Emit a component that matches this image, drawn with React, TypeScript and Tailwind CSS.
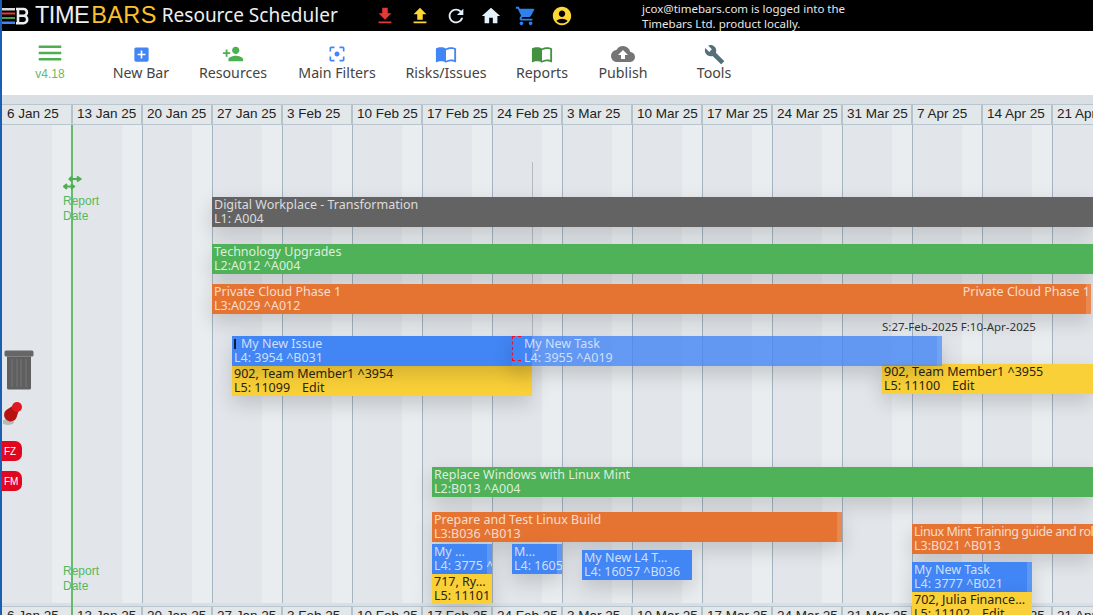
import { MdFileDownload, MdFileUpload, MdRefresh, MdHome, MdShoppingCart, MdAccountCircle, MdMenu, MdAddBox, MdPersonAdd, MdFilterCenterFocus, MdImportContacts, MdCloudUpload, MdBuild } from 'react-icons/md';

const dates = ['6 Jan 25', '13 Jan 25', '20 Jan 25', '27 Jan 25', '3 Feb 25', '10 Feb 25', '17 Feb 25', '24 Feb 25', '3 Mar 25', '10 Mar 25', '17 Mar 25', '24 Mar 25', '31 Mar 25', '7 Apr 25', '14 Apr 25', '21 Apr 25'];

const barFont = "font-['Noto_Sans',sans-serif] text-[12.5px] leading-[14px]";
const barShadow = 'shadow-[0_8px_20px_rgba(0,0,0,0.16)]';
const grey = 'bg-[#636363] text-[#dcdcdc]';
const green = 'bg-[#4fb158] text-[#dcefdd]';
const orange = 'bg-[#e57432] text-[#f5ddcd]';
const blue = 'bg-[#4285f4] text-[#cfdffb]';
const yellow = 'bg-[#fad038] text-[#2a2410]';

const bars = [
  { cls: `left-[210px] top-[72px] w-[881px] ${grey}`, a: 'Digital Workplace - Transformation', b: 'L1: A004' },
  { cls: `left-[210px] top-[119px] w-[881px] ${green}`, a: 'Technology Upgrades', b: 'L2:A012 ^A004' },
  { cls: `left-[430px] top-[342px] w-[661px] ${green}`, a: 'Replace Windows with Linux Mint', b: 'L2:B013 ^A004' },
  { cls: `left-[430px] top-[387px] w-[410px] ${orange}`, a: 'Prepare and Test Linux Build', b: 'L3:B036 ^B013', end: true },
  { cls: `left-[910px] top-[399px] w-[181px] ${orange}`, a: 'Linux Mint Training guide and roll out', b: 'L3:B021 ^B013', tight: true },
  { cls: `left-[230px] top-[241px] w-[300px] ${yellow}`, a: '902, Team Member1 ^3954', b: 'L5: 11099', edit: true },
  { cls: `left-[880px] top-[239px] w-[211px] ${yellow}`, a: '902, Team Member1 ^3955', b: 'L5: 11100', edit: true },
  { cls: `left-[430px] top-[419px] w-[60px] ${blue}`, a: 'My …', b: 'L4: 3775 ^B036', end: true },
  { cls: `left-[430px] top-[449px] w-[60px] ${yellow}`, a: '717, Ry…', b: 'L5: 11101' },
  { cls: `left-[510px] top-[419px] w-[50px] ${blue}`, a: 'M…', b: 'L4: 16056', end: true },
  { cls: `left-[580px] top-[425px] w-[110px] ${blue}`, a: 'My New L4 T…', b: 'L4: 16057 ^B036' },
  { cls: `left-[910px] top-[437px] w-[120px] ${blue}`, a: 'My New Task', b: 'L4: 3777 ^B021', end: true },
  { cls: `left-[910px] top-[467px] w-[120px] ${yellow}`, a: '702, Julia Finance…', b: 'L5: 11102', edit: true },
];

function ToolItem({ icon, label, width }: { icon: React.ReactNode; label: string; width: string }) {
  return (
    <div className={`flex flex-col items-center ${width}`}>
      <div className="flex h-[24px] items-center">{icon}</div>
      <span className="-mt-[3px] font-['Noto_Sans',sans-serif] text-[14.2px] leading-[20px] text-[#444]">{label}</span>
    </div>
  );
}

function DateRow() {
  return (
    <div className="flex h-[21px] w-[1121px] shrink-0 border-y border-[#b9c6cf] bg-[#e2e7ea] pl-[1px]">
      {dates.map(d => (
        <div key={d} className="w-[70px] shrink-0 border-r-2 border-[#b4c2cc] pl-[4px] font-['Liberation_Sans',sans-serif] text-[13.5px] leading-[18px] text-[#222]">
          {d}
        </div>
      ))}
    </div>
  );
}

function ReportDate({ cls }: { cls: string }) {
  return (
    <div className={`absolute left-[61px] font-['Liberation_Sans',sans-serif] text-[12px] leading-[15px] text-[#55b85c] ${cls}`}>
      Report<br />Date
    </div>
  );
}

export default function App() {
  return (
    <div className="flex h-[615px] w-[1093px] flex-col overflow-hidden border-l-2 border-[#1a5fb4] bg-white">
      <header className="flex h-[31px] shrink-0 items-center bg-black text-white">
        <div className="flex w-[365px] items-center">
          <svg width="27" height="20" viewBox="0 0 27 20" className="shrink-0">
            <rect x="0" y="2" width="13" height="2.5" fill="#d9d9d9" />
            <rect x="0" y="6.5" width="13" height="2" fill="#e53935" />
            <rect x="0" y="11" width="13" height="2" fill="#43a047" />
            <rect x="0" y="15.5" width="13" height="2.5" fill="#4285f4" />
            <path d="M14 3h7.5a3.3 3.3 0 0 1 0 6.8H16M21.5 9.8a3.7 3.7 0 0 1 0 7.4H14M16 3v14" fill="none" stroke="#eceff1" strokeWidth="2.6" />
          </svg>
          <span className="ml-[6px] font-['Liberation_Sans',sans-serif] text-[23.5px] leading-[31px] tracking-[-0.5px] text-[#eceff1]">TIME</span>
          <span className="ml-[2px] font-['Liberation_Sans',sans-serif] text-[23.5px] leading-[31px] tracking-[0.4px] text-[#fbc02d]">BARS</span>
          <span className="ml-[5px] font-['Noto_Sans',sans-serif] text-[19px] leading-[31px] text-[#eceff1]">Resource Scheduler</span>
        </div>
        <div className="flex w-[35px] justify-center text-[22px] text-[#e53935]"><MdFileDownload /></div>
        <div className="flex w-[36px] justify-center text-[22px] text-[#fdd835]"><MdFileUpload /></div>
        <div className="flex w-[35px] justify-center text-[22px] text-[#e3f2fd]"><MdRefresh /></div>
        <div className="flex w-[35px] justify-center text-[22px] text-[#e3f2fd]"><MdHome /></div>
        <div className="flex w-[36px] justify-center text-[22px] text-[#2f80ed]"><MdShoppingCart /></div>
        <div className="flex w-[35px] justify-center text-[22px] text-[#fdd835]"><MdAccountCircle /></div>
        <div className="ml-[63px] font-['Noto_Sans',sans-serif] text-[11.5px] leading-[15px] text-[#e8e8e8]">
          jcox@timebars.com is logged into the<br />Timebars Ltd. product locally.
        </div>
      </header>

      <nav className="flex h-[64px] shrink-0 items-start bg-white pt-[11px]">
        <div className="flex w-[96px] flex-col items-center">
          <MdMenu className="text-[30px] text-[#4caf50] -my-[4px]" />
          <span className="mt-[3px] font-['Liberation_Sans',sans-serif] text-[12px] leading-[14px] text-[#66bb6a]">v4.18</span>
        </div>
        <ToolItem width="w-[86px]" label="New Bar" icon={<MdAddBox className="text-[19px] text-[#4285f4]" />} />
        <ToolItem width="w-[98px]" label="Resources" icon={<MdPersonAdd className="text-[22px] text-[#4caf50]" />} />
        <ToolItem width="w-[110px]" label="Main Filters" icon={<MdFilterCenterFocus className="text-[20px] text-[#4285f4]" />} />
        <ToolItem width="w-[108px]" label="Risks/Issues" icon={<MdImportContacts className="text-[22px] text-[#4285f4]" />} />
        <ToolItem width="w-[84px]" label="Reports" icon={<MdImportContacts className="text-[22px] text-[#43923f]" />} />
        <ToolItem width="w-[78px]" label="Publish" icon={<MdCloudUpload className="text-[24px] text-[#757575]" />} />
        <ToolItem width="w-[104px]" label="Tools" icon={<MdBuild className="text-[21px] text-[#546e7a]" />} />
      </nav>

      <div className="h-[9px] shrink-0 bg-[#d9dfe2]" />
      <DateRow />

      <main className="relative z-10 flex min-h-0 flex-1 bg-[#e2e6ea] pl-[1px]">
        {dates.map(d => (
          <div key={d} className="flex w-[70px] shrink-0 border-r border-[#a3b3bf]">
            <div className="flex-1" />
            <div className="w-[20px] bg-[#e9edf0]" />
          </div>
        ))}

        <div className="absolute left-[69px] top-0 h-[490px] w-[2px] bg-[#66bb6a]" />
        <div className="absolute left-[530px] top-[37px] h-[174px] w-[1px] bg-[#b5bdc4]" />

        <svg width="20" height="14" viewBox="0 0 20 14" className="absolute left-[61px] top-[51px] text-[#4caf50]">
          <path d="M7 3h10M14 0.5 17.5 3 14 5.5M9 0.5 6.5 3 9 5.5M1 10.5h10M4 8 1 10.5 4 13M8 8l3 2.5L8 13" fill="none" stroke="currentColor" strokeWidth="2" />
        </svg>
        <ReportDate cls="top-[69px]" />
        <ReportDate cls="top-[439px]" />

        {bars.map(bar => (
          <div key={bar.b} className={`absolute h-[30px] overflow-hidden whitespace-nowrap py-[1px] pl-[2px] ${barShadow} ${barFont} ${bar.cls}`}>
            <div className={bar.tight ? 'tracking-[-0.45px]' : ''}>{bar.a}</div>
            <div>
              {bar.b}
              {bar.edit && <span className="ml-[12px]">Edit</span>}
            </div>
            {bar.end && <div className="absolute inset-y-0 right-0 w-[5px] bg-white/15" />}
          </div>
        ))}

        <div className={`absolute left-[210px] top-[159px] h-[30px] w-[879px] overflow-hidden whitespace-nowrap bg-[#e57432] py-[1px] pl-[2px] text-[#f5ddcd] ${barShadow} ${barFont}`}>
          <div>Private Cloud Phase 1</div>
          <div>L3:A029 ^A012</div>
          <div className="absolute inset-y-0 right-0 w-[5px] bg-white/15" />
          <div className="absolute right-[1px] top-[1px]">Private Cloud Phase 1</div>
        </div>

        <div className={`absolute left-[230px] top-[211px] h-[30px] w-[300px] whitespace-nowrap bg-[#4285f4] py-[1px] pl-[2px] text-[#cfdffb] ${barShadow} ${barFont}`}>
          <div><span className="mr-[5px] inline-block h-[10px] w-[2px] translate-y-[1px] bg-[#0d1b3e]" />My New Issue</div>
          <div>L4: 3954 ^B031</div>
        </div>
        <div className={`absolute left-[510px] top-[211px] h-[30px] w-[430px] whitespace-nowrap bg-[#4285f4]/80 py-[1px] pl-[12px] text-[#cfdffb] ${barShadow} ${barFont}`}>
          <div>My New Task</div>
          <div>L4: 3955 ^A019</div>
          <div className="absolute inset-y-0 right-0 w-[5px] bg-white/10" />
        </div>
        <div className="absolute left-[510px] top-[211px] h-[25px] w-[9px] border-y border-l border-dashed border-[#e8112d]" />

        <div className={`absolute left-[880px] top-[195px] whitespace-nowrap text-[11.5px] leading-[14px] text-[#333] font-['Noto_Sans',sans-serif]`}>S:27-Feb-2025 F:10-Apr-2025</div>

        <svg width="30" height="40" viewBox="0 0 30 40" className="absolute left-[2px] top-[225px]">
          <rect x="0.5" y="0.5" width="29" height="6" rx="1.5" fill="#666" />
          <path d="M3 6.5h24V38a1.5 1.5 0 0 1-1.5 1.5h-21A1.5 1.5 0 0 1 3 38Z" fill="#5f5f5f" />
          <path d="M8 9v28M13 9v28M17 9v28M22 9v28" stroke="#6f6f6f" strokeWidth="1.5" />
        </svg>
        <svg width="20" height="24" viewBox="0 0 20 24" className="absolute left-[1px] top-[276px]">
          <ellipse cx="5" cy="21" rx="6" ry="3" fill="#000" opacity="0.2" />
          <path d="M11 4 4 8.5a6.5 6.5 0 1 0 10 6.5l2-6Z" fill="#b71212" />
          <circle cx="14" cy="6" r="5" fill="#e01822" />
        </svg>

        <div className="absolute left-0 top-[316px] flex h-[20px] w-[20px] items-center rounded-r-[7px] bg-[#e0071f] pl-[2px] font-['Liberation_Sans',sans-serif] text-[10px] text-white">FZ</div>
        <div className="absolute left-0 top-[346px] flex h-[20px] w-[20px] items-center rounded-r-[7px] bg-[#e0071f] pl-[2px] font-['Liberation_Sans',sans-serif] text-[10px] text-white">FM</div>
      </main>

      <div className="h-[3px] shrink-0 bg-[#d9dfe2]" />
      <div className="h-[9px] shrink-0"><DateRow /></div>
    </div>
  );
}
